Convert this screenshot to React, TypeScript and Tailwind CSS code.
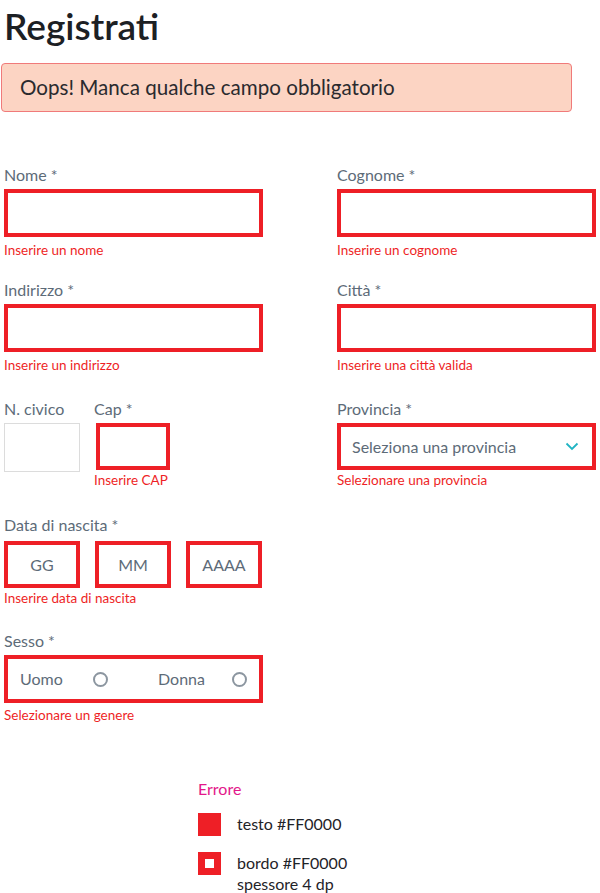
import React from 'react';

const RED = 'border-[#ee1f26]';

function Label({ children, mb = 'mb-[4px]' }: { children: React.ReactNode; mb?: string }) {
  return <div className={`text-[16px] leading-[20px] text-[#5d6b78] ${mb} whitespace-nowrap`}>{children}</div>;
}

function ErrorText({ children, mt = 'mt-[3px]' }: { children: React.ReactNode; mt?: string }) {
  return <div className={`text-[13.5px] leading-[20px] text-[#ee1f26] ${mt} whitespace-nowrap`}>{children}</div>;
}

function Field({ label, error }: { label: string; error: string }) {
  return (
    <div>
      <Label>{label}</Label>
      <div className={`h-[48px] border-4 ${RED} bg-white`} />
      <ErrorText>{error}</ErrorText>
    </div>
  );
}

function Radio() {
  return <span className="w-[15px] h-[15px] rounded-full border-2 border-[#8c96a0] inline-block" />;
}

export default function App() {
  return (
    <div className="w-[600px] h-[893px] bg-white overflow-hidden font-['Lato',sans-serif] text-[#1f2328]">
      {/* Title */}
      <h1 className="pl-[4px] pt-[4px] text-[37px] leading-[44px] font-semibold text-[#1c2024]">Registrati</h1>

      {/* Alert */}
      <div className="mt-[15px] ml-[1px] w-[571px] h-[49px] rounded-[4px] border border-[#f07a7a] bg-[#fcd4c3] flex items-center pl-[18px] text-[20.6px] text-[#2a2a2e]">
        Oops! Manca qualche campo obbligatorio
      </div>

      {/* Form */}
      <div className="pl-[4px] mt-[53px] grid grid-cols-[259px_259px] gap-x-[74px]">
        <Field label="Nome *" error="Inserire un nome" />
        <Field label="Cognome *" error="Inserire un cognome" />

        <div className="mt-[20px]">
          <Field label="Indirizzo *" error="Inserire un indirizzo" />
        </div>
        <div className="mt-[20px]">
          <Field label="Città *" error="Inserire una città valida" />
        </div>

        {/* Civico + Cap */}
        <div className="mt-[24px] flex gap-[14px]">
          <div className="w-[76px]">
            <Label>N. civico</Label>
            <div className="h-[49px] border border-[#dcdcdc] bg-white" />
          </div>
          <div className="w-[76px]">
            <Label>Cap *</Label>
            <div className={`ml-[2px] h-[47px] border-4 ${RED} bg-white`} />
            <ErrorText mt="mt-0">Inserire CAP</ErrorText>
          </div>
        </div>

        {/* Provincia */}
        <div className="mt-[24px]">
          <Label>Provincia *</Label>
          <div className={`h-[47px] border-4 ${RED} bg-white flex items-center justify-between pl-[11px] pr-[13px]`}>
            <span className="text-[16px] text-[#5d6b78]">Seleziona una provincia</span>
            <svg width="14" height="9" viewBox="0 0 14 9" fill="none">
              <path d="M1.5 1.5 L7 7 L12.5 1.5" stroke="#21b4c3" strokeWidth="1.8" />
            </svg>
          </div>
          <ErrorText mt="mt-0">Selezionare una provincia</ErrorText>
        </div>

        {/* Data di nascita */}
        <div className="mt-[25px] col-span-2">
          <Label mb="mb-[6px]">Data di nascita *</Label>
          <div className="flex gap-[15px] w-[259px]">
            {['GG', 'MM', 'AAAA'].map((p) => (
              <div
                key={p}
                className={`w-[76px] h-[47px] border-4 ${RED} bg-white flex items-center justify-center text-[16px] text-[#5d6b78]`}
              >
                {p}
              </div>
            ))}
          </div>
          <ErrorText mt="mt-0">Inserire data di nascita</ErrorText>
        </div>

        {/* Sesso */}
        <div className="mt-[23px] col-span-2 w-[259px]">
          <Label>Sesso *</Label>
          <div className={`h-[48px] border-4 ${RED} bg-white flex items-center pl-[12px] text-[16px] text-[#5d6b78]`}>
            <span className="w-[73px]">Uomo</span>
            <Radio />
            <span className="ml-[50px] w-[74px]">Donna</span>
            <Radio />
          </div>
          <ErrorText mt="mt-[2px]">Selezionare un genere</ErrorText>
        </div>
      </div>

      {/* Legend */}
      <div className="ml-[198px] mt-[54px]">
        <div className="text-[16px] leading-[20px] text-[#e3178a]">Errore</div>
        <div className="mt-[13px] flex items-center gap-[16px]">
          <span className="w-[23px] h-[23px] bg-[#ee1f26] inline-block" />
          <span className="text-[16px] text-[#1f2328]">testo #FF0000</span>
        </div>
        <div className="mt-[16px] flex items-start gap-[16px]">
          <span className="w-[23px] h-[23px] bg-[#ee1f26] flex items-center justify-center">
            <span className="w-[9px] h-[9px] bg-white" />
          </span>
          <div className="text-[16px] leading-[21px] text-[#1f2328]">
            bordo #FF0000
            <br />
            spessore 4 dp
          </div>
        </div>
      </div>
    </div>
  );
}
